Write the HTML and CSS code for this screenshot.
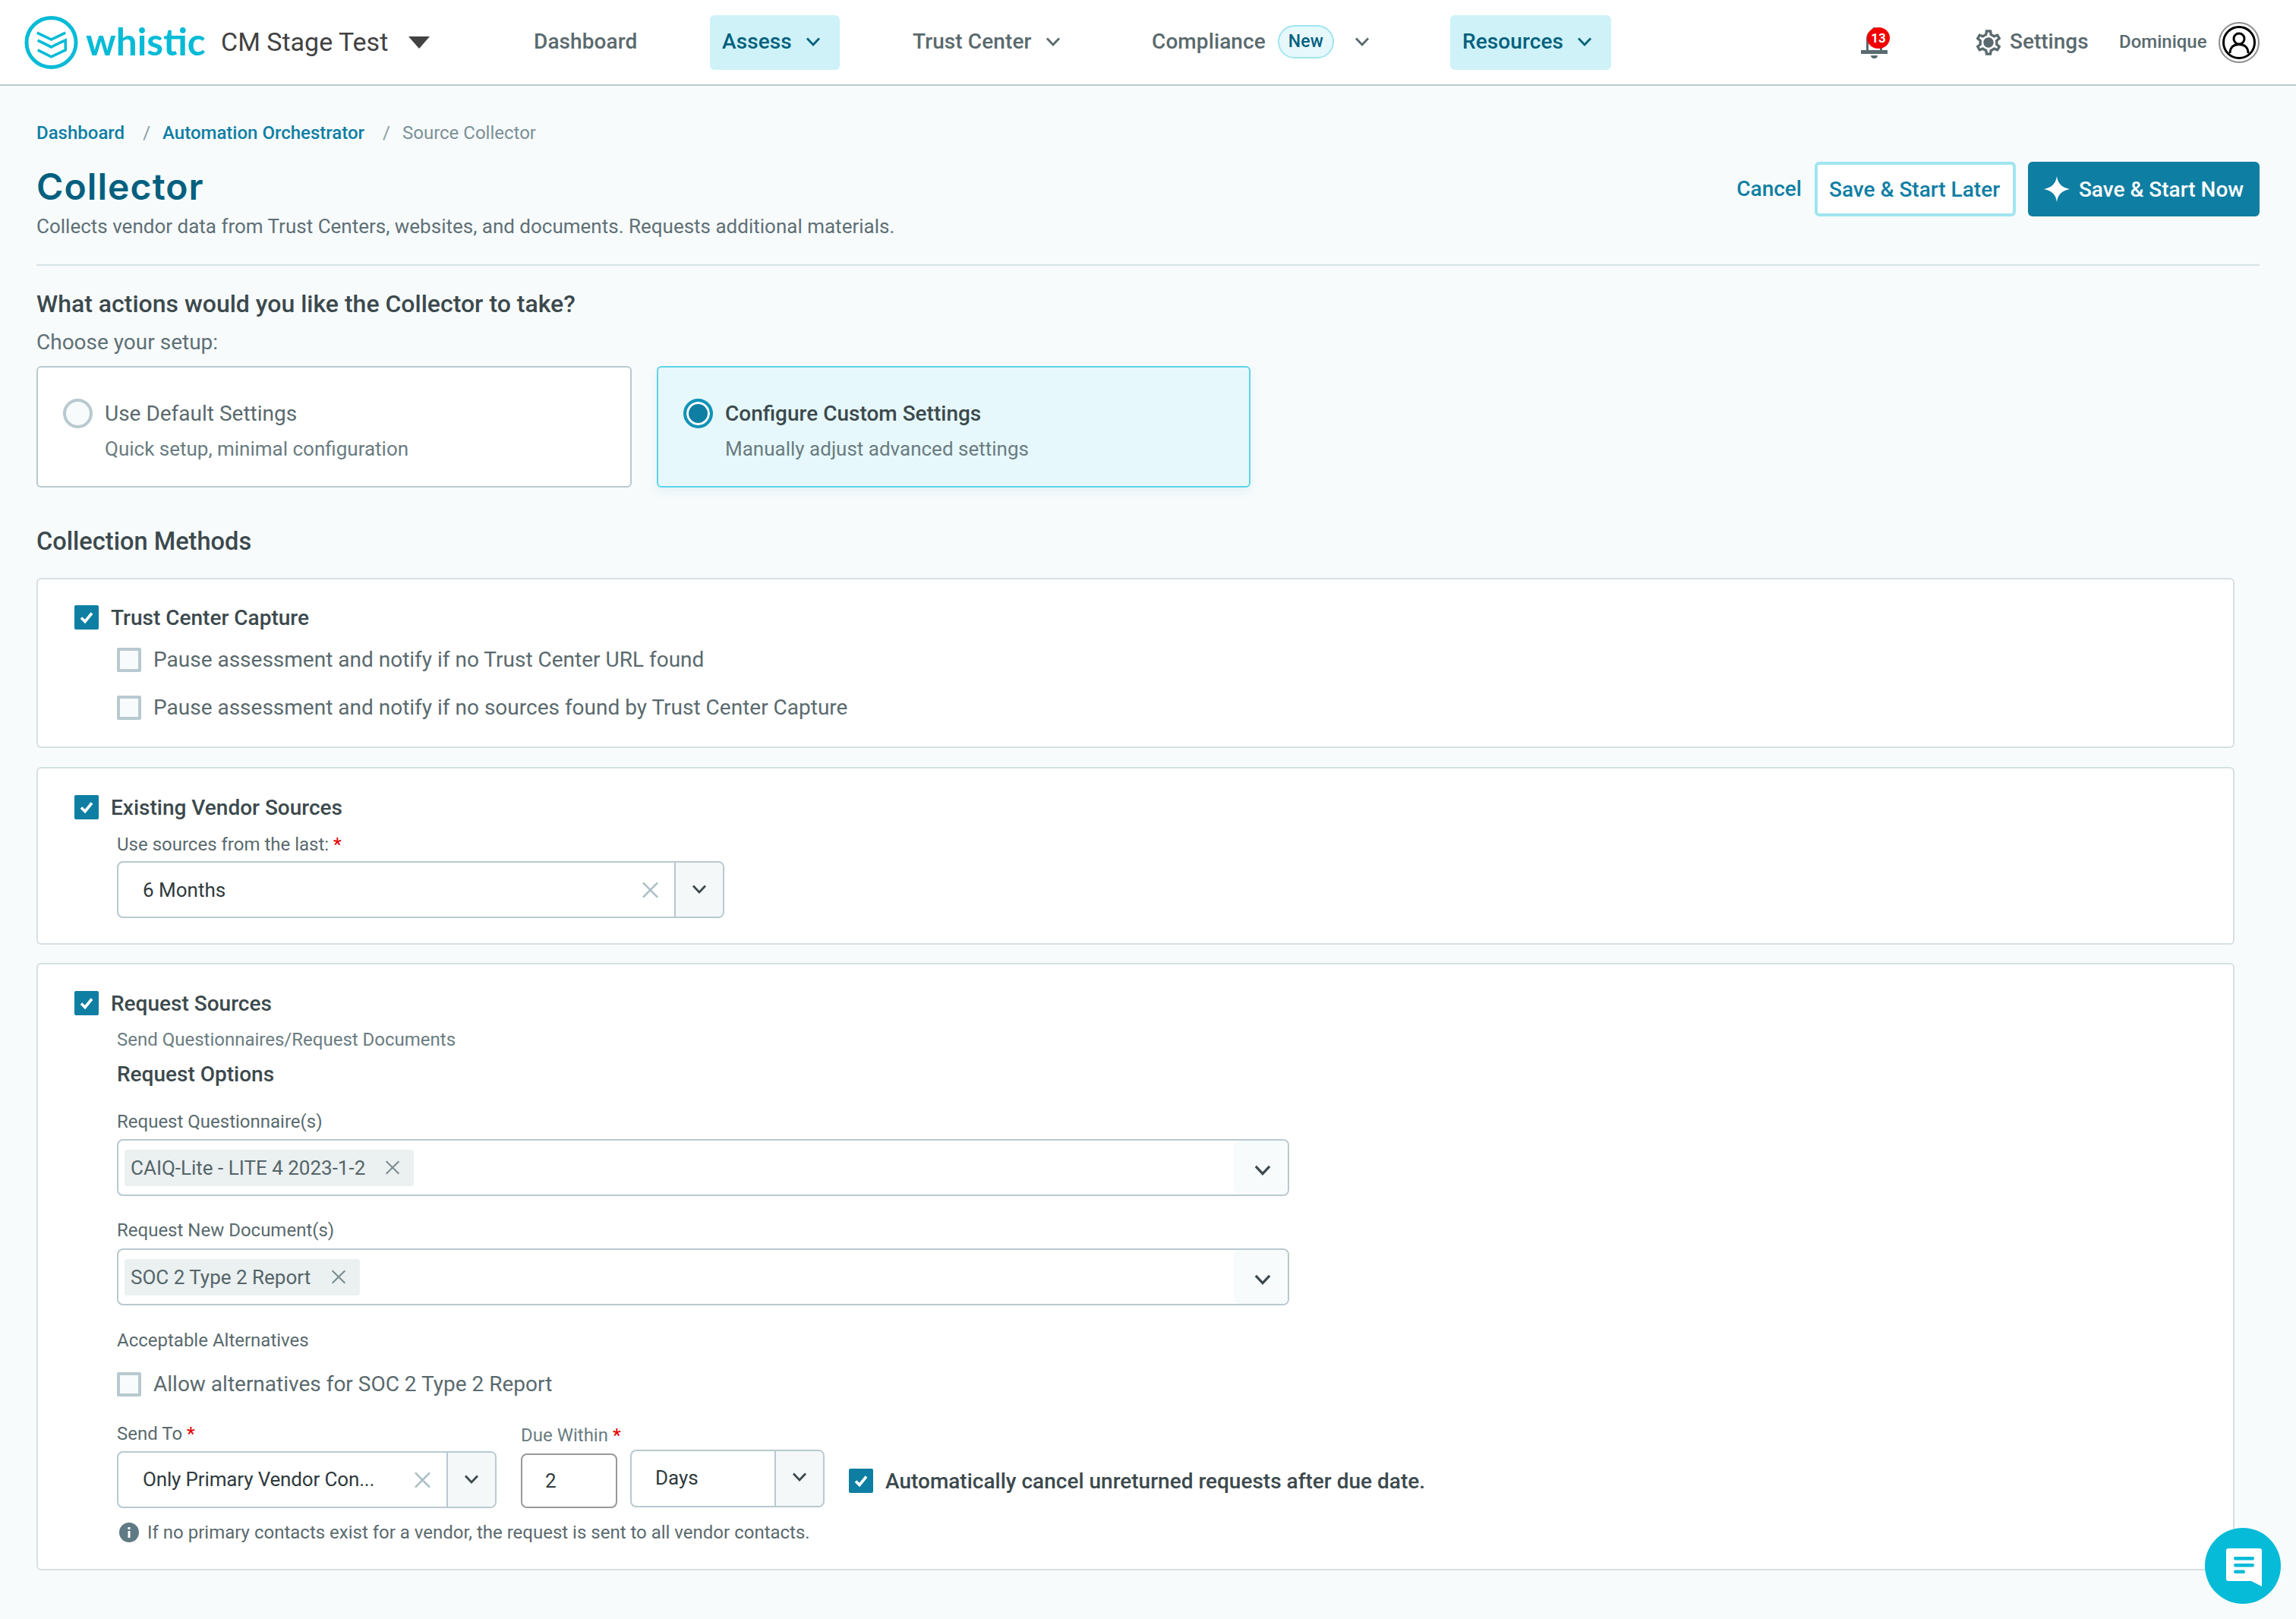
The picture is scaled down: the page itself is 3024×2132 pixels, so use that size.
FILE: index.html
```html
<!DOCTYPE html>
<html lang="en">
<head>
<meta charset="utf-8">
<title>Collector</title>
<link rel="stylesheet" href="styles.css">
</head>
<body>
<svg class="defs" width="0" height="0" aria-hidden="true">
  <symbol id="chev" viewBox="0 0 20 14"><path d="M2 2.5l8 8.5 8-8.5" fill="none" stroke="currentColor" stroke-width="2.8"/></symbol>
  <symbol id="x" viewBox="0 0 24 24"><path d="M2 2l20 20M22 2L2 22" fill="none" stroke="currentColor" stroke-width="2.6"/></symbol>
  <symbol id="tick" viewBox="0 0 32 32"><path d="M9 16.5l5 5 9-11" fill="none" stroke="#fff" stroke-width="3.6"/></symbol>
</svg>

<header class="topbar">
  <svg class="logo" viewBox="0 0 72 72" aria-hidden="true">
    <circle cx="36" cy="36" r="33" fill="none" stroke="#05bbd7" stroke-width="5"/>
    <path d="M17 23l19 9 19-9M18 33l18 9 10-5M46 37l9-4v13l-19 9-18-9" fill="none" stroke="#05bbd7" stroke-width="3.6"/>
  </svg>
  <span class="brand">whistic</span>
  <span class="org">CM Stage Test</span>
  <span class="org-caret"></span>
  <nav class="nav">
    <a class="nav-item nav-dash">Dashboard</a>
    <a class="nav-item nav-on nav-assess">Assess<svg class="nav-chev"><use href="#chev"/></svg></a>
    <a class="nav-item nav-trust">Trust Center<svg class="nav-chev"><use href="#chev"/></svg></a>
    <a class="nav-item nav-comp">Compliance<span class="pill">New</span><svg class="nav-chev nav-chev-wide"><use href="#chev"/></svg></a>
    <a class="nav-item nav-on nav-res">Resources<svg class="nav-chev"><use href="#chev"/></svg></a>
  </nav>
  <div class="bell">
    <svg class="bell-ico" viewBox="0 0 35 42" aria-hidden="true">
      <path d="M17.500 1a2.500 2.500 0 0 1 2.500 2.500v1.500c6 1.500 8 6.500 8 12v15h-3v-15c0-5-2.500-9-7.500-9s-7.500 4-7.500 9v15h-3v-15c0-5.500 2-10.500 8-12V3.500A2.500 2.500 0 0 1 17.500 1zM0 31h35v5H0zM13 38h9c0 2.500-2 4-4.500 4S13 40.500 13 38z" fill="#5a6a6e"/>
    </svg>
    <span class="badge">13</span>
  </div>
  <svg class="gear" viewBox="0 0 24 24" aria-hidden="true"><path fill="#5a6a6e" d="M19.430 12.980c.04-.32.07-.64.07-.98 0-.34-.03-.66-.07-.98l2.110-1.650c.19-.15.24-.42.12-.64l-2-3.460c-.09-.16-.26-.25-.44-.25-.06 0-.12.01-.17.03l-2.490 1c-.52-.4-1.080-.73-1.690-.98l-.38-2.650C14.460 2.180 14.250 2 14 2h-4c-.25 0-.46.18-.49.42l-.38 2.650c-.61.25-1.170.59-1.690.98l-2.490-1c-.06-.02-.12-.03-.18-.03-.17 0-.34.09-.43.25l-2 3.460c-.13.22-.07.49.12.64l2.110 1.650c-.04.32-.07.65-.07.98 0 .33.03.66.07.98l-2.110 1.650c-.19.15-.24.42-.12.64l2 3.460c.09.16.26.25.44.25.06 0 .12-.01.17-.03l2.490-1c.52.4 1.080.73 1.690.98l.38 2.650c.03.24.24.42.49.42h4c.25 0 .46-.18.49-.42l.38-2.650c.61-.25 1.170-.59 1.690-.98l2.490 1c.06.02.12.03.18.03.17 0 .34-.09.43-.25l2-3.460c.12-.22.07-.49-.12-.64l-2.110-1.650zm-1.980-1.710c.04.31.05.52.05.73 0 .21-.02.43-.05.73l-.14 1.130.89.7 1.080.84-.7 1.210-1.270-.51-1.040-.42-.9.68c-.43.32-.84.56-1.250.73l-1.060.43-.16 1.130-.2 1.350h-1.400l-.19-1.350-.16-1.130-1.060-.43c-.43-.18-.83-.41-1.230-.71l-.91-.7-1.060.43-1.270.51-.7-1.210 1.080-.84.89-.7-.14-1.130c-.03-.31-.05-.54-.05-.74s.02-.43.05-.73l.14-1.130-.89-.7-1.080-.84.7-1.210 1.270.51 1.040.42.9-.68c.43-.32.84-.56 1.250-.73l1.060-.43.16-1.130.2-1.350h1.390l.19 1.350.16 1.130 1.060.43c.43.18.83.41 1.230.71l.91.7 1.060-.43 1.270-.51.7 1.210-1.070.85-.89.7.14 1.130zM12 8c-2.210 0-4 1.790-4 4s1.790 4 4 4 4-1.790 4-4-1.790-4-4-4z"/></svg>
  <span class="settings">Settings</span>
  <span class="user">Dominique</span>
  <svg class="avatar" viewBox="0 0 54 54" aria-hidden="true">
    <circle cx="27" cy="27" r="26" fill="#fff" stroke="#8c8c8c" stroke-width="2"/>
    <circle cx="27" cy="27" r="20.500" fill="none" stroke="#000" stroke-width="3"/>
    <circle cx="27" cy="22" r="7" fill="none" stroke="#000" stroke-width="3"/>
    <path d="M15 41c0-8 5-11.500 12-11.500S39 33 39 41" fill="none" stroke="#000" stroke-width="3"/>
  </svg>
</header>

<main class="page">
  <div class="crumbs">
    <a class="crumb-link">Dashboard</a><span class="crumb-sep">/</span>
    <a class="crumb-link">Automation Orchestrator</a><span class="crumb-sep">/</span>
    <span class="crumb-here">Source Collector</span>
  </div>

  <div class="page-head">
    <div class="title-block">
      <h1 class="title">Collector</h1>
      <p class="subtitle">Collects vendor data from Trust Centers, websites, and documents. Requests additional materials.</p>
    </div>
    <div class="actions">
      <a class="btn-cancel">Cancel</a>
      <a class="btn btn-outline">Save &amp; Start Later</a>
      <a class="btn btn-fill"><svg class="spark" viewBox="0 0 34 34" aria-hidden="true"><path d="M17 0c1.500 10 6 14.500 17 17-11 2.500-15.500 7-17 17-1.500-10-6-14.500-17-17 11-2.500 15.500-7 17-17z" fill="#fff"/></svg>Save &amp; Start Now</a>
    </div>
  </div>

  <h2 class="h-q">What actions would you like the Collector to take?</h2>
  <p class="choose">Choose your setup:</p>
  <div class="cards">
    <div class="card">
      <span class="radio"></span>
      <div class="card-body">
        <div class="card-title">Use Default Settings</div>
        <div class="card-sub">Quick setup, minimal configuration</div>
      </div>
    </div>
    <div class="card card-on">
      <span class="radio radio-on"></span>
      <div class="card-body">
        <div class="card-title card-title-on">Configure Custom Settings</div>
        <div class="card-sub">Manually adjust advanced settings</div>
      </div>
    </div>
  </div>

  <h2 class="h-methods">Collection Methods</h2>

  <section class="panel panel-trust">
    <div class="check-row"><span class="cb cb-on"><svg><use href="#tick"/></svg></span><span class="check-title">Trust Center Capture</span></div>
    <div class="sub-rows">
      <div class="check-row row-a"><span class="cb"></span><span class="check-text">Pause assessment and notify if no Trust Center URL found</span></div>
      <div class="check-row row-b"><span class="cb"></span><span class="check-text">Pause assessment and notify if no sources found by Trust Center Capture</span></div>
    </div>
  </section>

  <section class="panel panel-existing">
    <div class="check-row"><span class="cb cb-on"><svg><use href="#tick"/></svg></span><span class="check-title">Existing Vendor Sources</span></div>
    <div class="indent">
      <label class="field-label fl-last">Use sources from the last: <b class="req">*</b></label>
      <div class="select sel-months">
        <span class="sel-value">6 Months</span>
        <svg class="sel-x"><use href="#x"/></svg>
        <span class="sel-ind"><svg class="sel-chev"><use href="#chev"/></svg></span>
      </div>
    </div>
  </section>

  <section class="panel panel-request">
    <div class="check-row"><span class="cb cb-on"><svg><use href="#tick"/></svg></span><span class="check-title">Request Sources</span></div>
    <div class="indent">
      <p class="muted-line">Send Questionnaires/Request Documents</p>
      <h3 class="h-options">Request Options</h3>

      <label class="field-label fl-q">Request Questionnaire(s)</label>
      <div class="select select-multi sm-1">
        <span class="chip chip-q">CAIQ-Lite - LITE 4 2023-1-2<svg class="chip-x"><use href="#x"/></svg></span>
        <span class="multi-ind"><svg class="multi-chev"><use href="#chev"/></svg></span>
      </div>

      <label class="field-label fl-d">Request New Document(s)</label>
      <div class="select select-multi sm-2">
        <span class="chip chip-d">SOC 2 Type 2 Report<svg class="chip-x"><use href="#x"/></svg></span>
        <span class="multi-ind"><svg class="multi-chev"><use href="#chev"/></svg></span>
      </div>

      <label class="field-label fl-alt">Acceptable Alternatives</label>
      <div class="check-row row-alt"><span class="cb"></span><span class="check-text">Allow alternatives for SOC 2 Type 2 Report</span></div>

      <div class="send-row">
        <div class="col-send">
          <label class="field-label fl-send">Send To <b class="req">*</b></label>
          <div class="select sel-send">
            <span class="sel-value">Only Primary Vendor Con...</span>
            <svg class="sel-x"><use href="#x"/></svg>
            <span class="sel-ind"><svg class="sel-chev"><use href="#chev"/></svg></span>
          </div>
        </div>
        <div class="col-due">
          <label class="field-label fl-due">Due Within <b class="req">*</b></label>
          <div class="num">2</div>
        </div>
        <div class="select sel-days">
          <span class="sel-value">Days</span>
          <span class="sel-ind"><svg class="sel-chev"><use href="#chev"/></svg></span>
        </div>
        <div class="check-row row-auto"><span class="cb cb-on"><svg><use href="#tick"/></svg></span><span class="check-title">Automatically cancel unreturned requests after due date.</span></div>
      </div>

      <div class="info">
        <svg class="info-ico" viewBox="0 0 26 26" aria-hidden="true"><circle cx="13" cy="13" r="13" fill="#5f7a84"/><rect x="11.500" y="11" width="3" height="9" fill="#fff"/><rect x="11.500" y="6" width="3" height="3" fill="#fff"/></svg>
        <span>If no primary contacts exist for a vendor, the request is sent to all vendor contacts.</span>
      </div>
    </div>
  </section>
</main>

<button class="chat" aria-label="Chat">
  <svg viewBox="0 0 48 50" width="48" height="50" aria-hidden="true">
    <path d="M3 0h41a3 3 0 0 1 3 3v47l-14-7H3a3 3 0 0 1-3-3V3a3 3 0 0 1 3-3z" fill="#fff"/>
    <rect x="10" y="11" width="27" height="4.500" rx="2.200" fill="#05bbd7"/>
    <rect x="10" y="20" width="27" height="4.500" rx="2.200" fill="#05bbd7"/>
    <rect x="10" y="28.500" width="15" height="4.500" rx="2.200" fill="#05bbd7"/>
  </svg>
</button>
</body>
</html>
```

FILE: styles.css
```css
* { box-sizing: border-box; }
html, body { margin: 0; padding: 0; }
body {
  background: #f7fbfc;
  color: #5a6a6e;
  font-family: Roboto, "Liberation Sans", sans-serif;
  font-size: 28px;
  min-height: 2132px;
  position: relative;
  overflow-x: hidden;
}
p, h1, h2, h3 { margin: 0; }
.defs { position: absolute; }

/* top bar */
.topbar {
  height: 113px;
  background: #fff;
  border-bottom: 2px solid #b8c9cf;
  display: flex;
  align-items: center;
  padding-left: 32px;
}
.logo { width: 71px; height: 72px; flex: none; margin-top: 1px; }
.brand {
  font-family: Lato, sans-serif;
  font-weight: 700;
  font-size: 49.5px;
  line-height: 60px;
  color: #05bbd7;
  margin-left: 10px;
  width: 178px;
  margin-top: -4px;
}
.org { font-size: 34px; color: #424242; width: 247px; padding-bottom: 2px; }
.org-caret {
  width: 0; height: 0;
  border-left: 14px solid transparent;
  border-right: 14px solid transparent;
  border-top: 16px solid #424242;
  margin-top: 1px;
}
.nav { display: flex; align-items: center; margin-left: 137px; width: 1733px; flex: none; }
.nav-item {
  display: flex;
  align-items: center;
  height: 72px;
  padding-bottom: 2px;
  font-size: 28px;
  font-weight: 500;
  color: #5a6a6e;
  flex: none;
  letter-spacing: .1px;
}
.nav-on { background: #cef2f7; color: #02607e; border-radius: 6px; padding-left: 16px; }
.nav-dash { width: 232px; }
.nav-assess { width: 171px; }
.nav-trust { margin-left: 96px; width: 219px; }
.nav-comp { margin-left: 96px; width: 393px; }
.nav-res { width: 212px; }
.nav-chev { width: 20px; height: 14px; margin-left: 18px; }
.nav-chev-wide { margin-left: 27px; }
.pill {
  display: flex; align-items: center; justify-content: center;
  width: 74px; height: 44px;
  margin-left: 16px;
  border: 2px solid #a0e5f0;
  border-radius: 22px;
  background: #e6f8fb;
  color: #02607e;
  font-size: 23px;
}
.bell { position: relative; width: 38px; height: 42px; margin-left: 15px; flex: none; }
.bell-ico { width: 35px; height: 42px; display: block; }
.badge {
  position: absolute;
  left: 8px; top: 1px;
  width: 30px; height: 28px;
  border-radius: 50%;
  background: #f10000;
  color: #fff;
  font-size: 17px;
  font-weight: 700;
  display: flex; align-items: center; justify-content: center;
}
.gear { width: 40px; height: 40px; margin-left: 110px; flex: none; }
.settings { font-size: 28px; font-weight: 500; margin-left: 8px; width: 144px; padding-bottom: 2px; }
.user { font-size: 24px; font-weight: 500; width: 131px; padding-bottom: 2px; }
.avatar { width: 54px; height: 54px; flex: none; }

/* page */
.page { padding: 46px 48px 0; }
.crumbs { display: flex; height: 33px; line-height: 33px; font-size: 24px; font-weight: 500; }
.crumb-link { color: #0f7ea3; }
.crumb-sep { color: #8a9ca1; font-weight: 400; margin: 0 16px 0 24px; }
.crumb-here { color: #7b9096; font-weight: 400; }

.page-head {
  display: flex;
  justify-content: space-between;
  margin-top: 21px;
  padding-bottom: 32px;
  border-bottom: 2px solid #d6e0e3;
}
.title-block { padding-top: 5px; }
.title {
  font-family: Inter, sans-serif;
  font-size: 48px;
  font-weight: 600;
  letter-spacing: 1.1px;
  line-height: 56px;
  color: #02607e;
}
.subtitle { font-size: 26px; line-height: 36px; margin-top: 6px; color: #5f7076; }
.actions { display: flex; align-items: flex-start; }
.btn-cancel { font-size: 28px; font-weight: 500; color: #0f7ea3; line-height: 72px; margin-right: 17px; }
.btn {
  display: flex; align-items: center; justify-content: center;
  height: 72px;
  border-radius: 6px;
  font-size: 28px;
  font-weight: 500;
}
.btn-outline { width: 265px; background: #fff; color: #0f7ea3; border: 4px solid #a0e5f0; padding-right: 2px; }
.btn-fill { width: 305px; margin-left: 16px; background: #0f7ea3; color: #fff; }
.spark { width: 34px; height: 34px; margin-right: 12px; }

.h-q { font-size: 32px; font-weight: 500; line-height: 40px; color: #3c494d; margin-top: 30px; }
.choose { font-size: 28px; line-height: 36px; margin-top: 13px; color: #5f7076; }

.cards { display: flex; gap: 33px; margin-top: 13px; }
.card {
  width: 784px; height: 160px;
  background: #fff;
  border: 2px solid #b8c9cf;
  border-radius: 6px;
  display: flex;
  padding: 41px 0 0 33px;
  gap: 16px;
}
.card-body { padding-top: 1px; }
.card-on {
  width: 782px;
  background: #e6f8fb;
  border-color: #5fd3e7;
  box-shadow: 0 6px 14px rgba(15, 126, 163, .08);
}
.radio {
  width: 39px; height: 39px;
  flex: none;
  border-radius: 50%;
  border: 4px solid #b8c9cf;
  background: #f7fbfc;
}
.radio-on {
  border-color: #0f94b8;
  background: #0f7ea3;
  box-shadow: inset 0 0 0 3px #fff;
}
.card-title { font-size: 28px; line-height: 38px; color: #5a6a6e; }
.card-title-on { font-weight: 500; color: #3c494d; }
.card-sub { font-size: 26px; line-height: 36px; margin-top: 9px; color: #6a7c81; }

.h-methods { font-size: 32.6px; font-weight: 500; line-height: 40px; color: #3c494d; margin-top: 51px; }

.panel {
  background: #fff;
  border: 2px solid #d6e0e3;
  border-radius: 6px;
  width: 2895px;
  padding-left: 48px;
}
.panel-trust { margin-top: 28px; padding-top: 34px; padding-bottom: 35px; }
.panel-existing { margin-top: 25px; padding-top: 35px; padding-bottom: 33px; }
.panel-request { margin-top: 24px; padding-top: 35px; padding-bottom: 32px; }

.check-row { display: flex; align-items: center; height: 32px; }
.cb {
  width: 32px; height: 32px;
  flex: none;
  border: 4px solid #b8c9cf;
  background: #f7fbfc;
  border-radius: 2px;
}
.cb-on { border: none; background: #0f7ea3; }
.cb-on svg { width: 32px; height: 32px; display: block; }
.check-title { margin-left: 16px; font-size: 28px; font-weight: 500; color: #3c494d; white-space: nowrap; }
.check-text { margin-left: 16px; font-size: 28px; color: #5a6a6e; white-space: nowrap; padding-bottom: 2px; }

.sub-rows { margin-left: 56px; }
.row-a { margin-top: 24px; }
.row-b { margin-top: 31px; }

.indent { margin-left: 56px; }
.field-label { display: block; font-size: 24px; line-height: 32px; color: #5a6a6e; }
.req { color: #e60000; font-weight: 500; }
.fl-last { margin-top: 17px; }
.fl-q { margin-top: 28px; }
.fl-d { margin-top: 29px; }
.fl-alt { margin-top: 30px; }
.muted-line { font-size: 24px; line-height: 32px; margin-top: 16px; color: #6a7c81; }
.h-options { font-size: 28px; font-weight: 500; line-height: 36px; margin-top: 12px; color: #3c494d; }
.row-alt { margin-top: 26px; }

.select {
  display: flex;
  align-items: center;
  background: #fff;
  border: 2px solid #b8c9cf;
  border-radius: 8px;
  overflow: hidden;
  height: 75px;
}
.sel-months { width: 800px; margin-top: 6px; }
.sel-value { flex: 1; padding-left: 32px; font-size: 26px; color: #2f3a3d; white-space: nowrap; }
.sel-x { width: 23px; height: 24px; color: #aabfc5; margin-right: 20px; flex: none; }
.sel-ind {
  width: 64px; height: 100%;
  flex: none;
  background: #f4f8f9;
  border-left: 2px solid #b8c9cf;
  display: flex; align-items: center; justify-content: center;
  padding-bottom: 2px;
}
.sel-chev { width: 20px; height: 14px; color: #3c494d; }

.select-multi { width: 1544px; padding-left: 8px; position: relative; }
.sm-1 { margin-top: 7px; }
.sm-2 { margin-top: 8px; }
.chip {
  display: flex; align-items: center;
  height: 48px;
  padding-left: 8px;
  background: #ebf0f1;
  border-radius: 4px;
  font-size: 26px;
  color: #546569;
  white-space: nowrap;
}
.chip-q { width: 381px; }
.chip-d { width: 310px; }
.chip-x { width: 20px; height: 21px; color: #7b8d92; margin-left: auto; margin-right: 18px; }
.multi-ind {
  position: absolute;
  right: 0; top: 0; bottom: 0;
  width: 71px;
  background: #f7fbfc;
  border-radius: 8px 0 0 8px;
  display: flex; align-items: center; justify-content: center;
  padding-top: 6px;
  padding-left: 4px;
}
.multi-chev { width: 24px; height: 16px; color: #3c494d; }

.send-row { display: flex; align-items: flex-start; margin-top: 33px; }
.col-send { width: 500px; }
.sel-send { margin-top: 7px; height: 75px; }
.sel-send .sel-value { letter-spacing: -.15px; padding-bottom: 1px; }
.col-due { width: 127px; margin-left: 32px; padding-top: 2px; white-space: nowrap; }
.fl-due { color: #6a7c81; }
.num {
  height: 72px;
  margin-top: 8px;
  border: 2px solid #999;
  border-radius: 8px;
  background: #fff;
  padding: 10px 0 0 30px;
  font-size: 26px;
  line-height: 48px;
  color: #2f3a3d;
}
.sel-days { width: 256px; height: 76px; margin-left: 17px; margin-top: 37px; }
.sel-days .sel-ind { padding-bottom: 4px; }
.sel-days .sel-value { padding-left: 31px; padding-bottom: 2px; }
.row-auto { margin-left: 32px; margin-top: 62px; }

.info { display: flex; align-items: center; height: 32px; margin-top: 16px; font-size: 24px; color: #5a6a6e; padding-left: 3px; }
.info span { padding-bottom: 1px; }
.info-ico { width: 26px; height: 26px; margin-right: 11px; flex: none; }

.chat {
  position: absolute;
  left: 2904px; top: 2012px;
  width: 100px; height: 100px;
  padding: 4px 0 0 3px;
  border: none;
  border-radius: 50%;
  background: #05bbd7;
  display: flex; align-items: center; justify-content: center;
}
```
